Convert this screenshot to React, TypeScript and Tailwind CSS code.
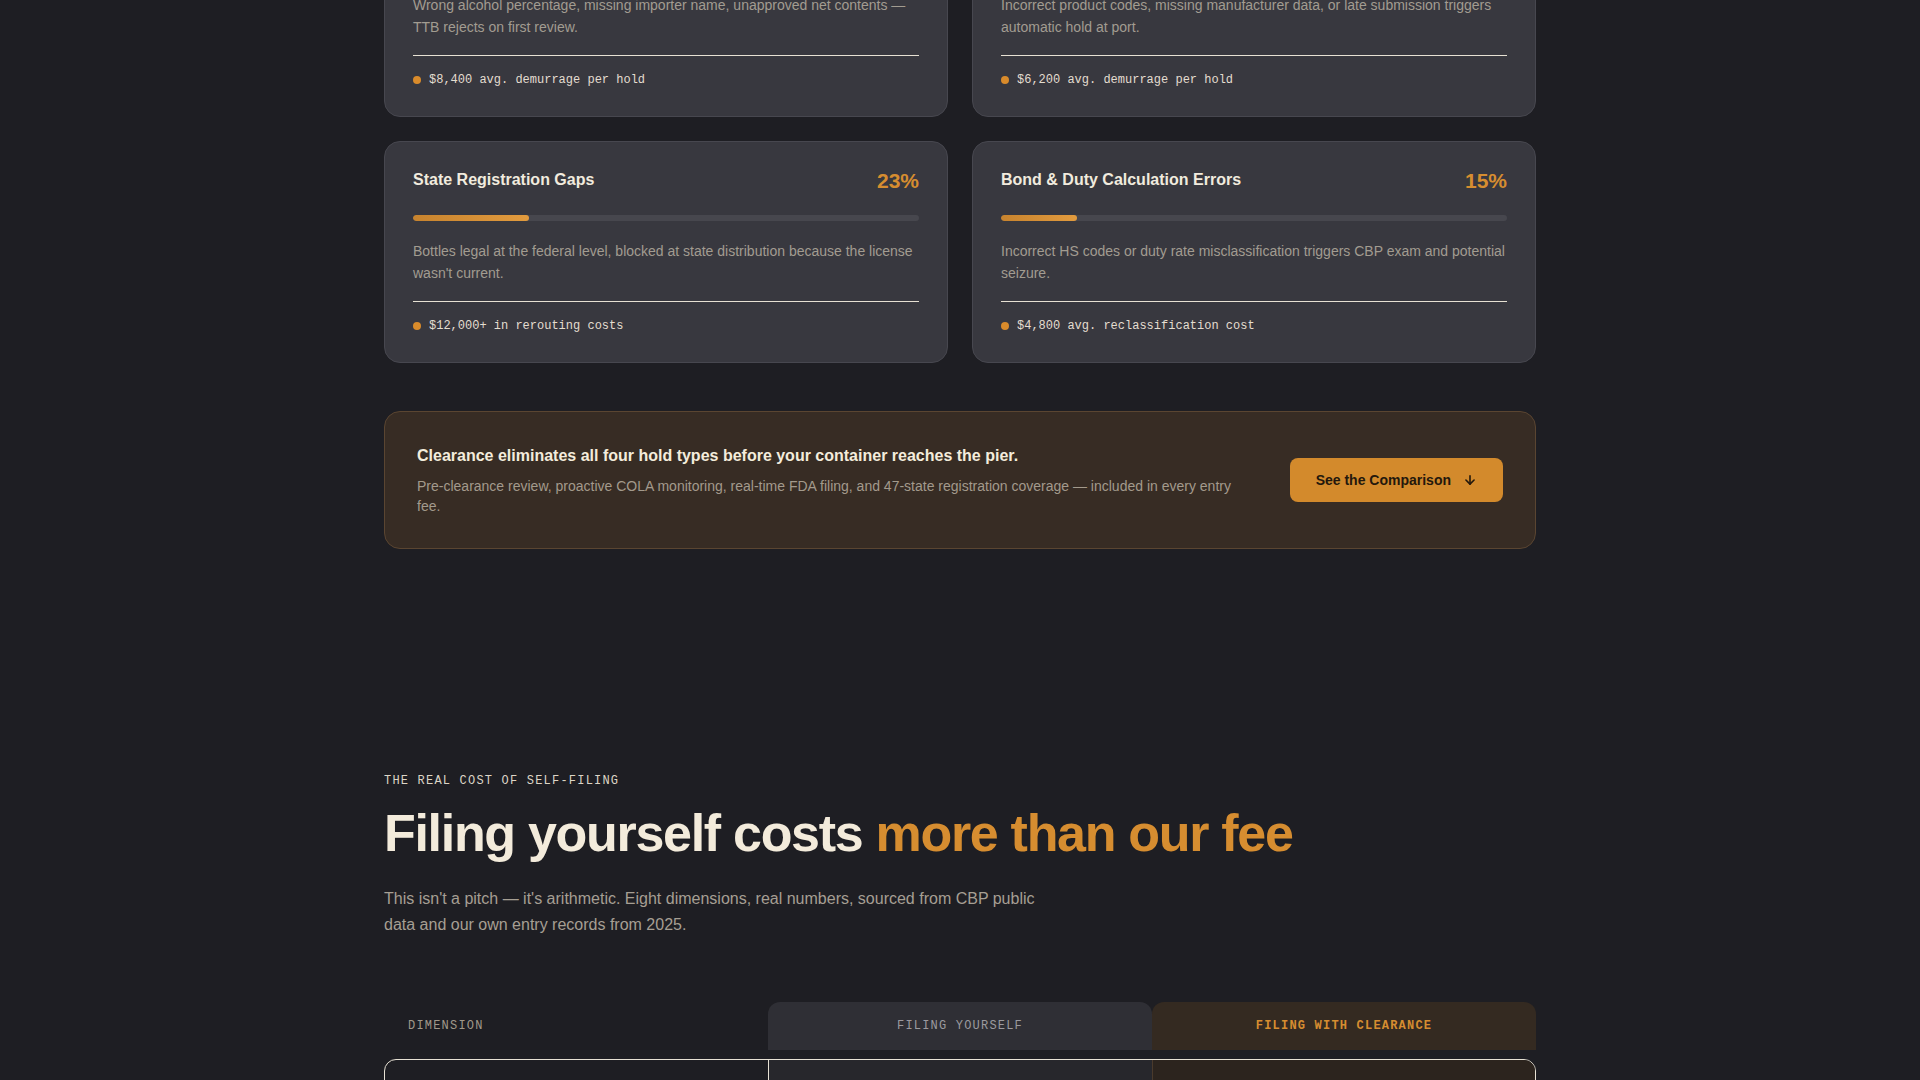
import { ArrowDown } from "lucide-react";

type Hold = {
  title: string;
  pct: number;
  desc: string;
  cost: string;
};

const HOLDS: Hold[] = [
  {
    title: "COLA Label Mismatches",
    pct: 34,
    desc: "Wrong alcohol percentage, missing importer name, unapproved net contents — TTB rejects on first review.",
    cost: "$8,400 avg. demurrage per hold",
  },
  {
    title: "FDA Prior Notice Errors",
    pct: 28,
    desc: "Incorrect product codes, missing manufacturer data, or late submission triggers automatic hold at port.",
    cost: "$6,200 avg. demurrage per hold",
  },
  {
    title: "State Registration Gaps",
    pct: 23,
    desc: "Bottles legal at the federal level, blocked at state distribution because the license wasn't current.",
    cost: "$12,000+ in rerouting costs",
  },
  {
    title: "Bond & Duty Calculation Errors",
    pct: 15,
    desc: "Incorrect HS codes or duty rate misclassification triggers CBP exam and potential seizure.",
    cost: "$4,800 avg. reclassification cost",
  },
];

const ROWS = [
  ["Time per entry", "6–10 hours", "Under 20 minutes"],
  ["Hold rate", "1 in 4 entries", "Under 2%"],
  ["Average demurrage", "$8,400 per hold", "$0 — covered"],
];

function HoldCard({ title, pct, desc, cost }: Hold) {
  return (
    <div className="rounded-2xl border border-[#47474f] bg-[#38383f] px-7 pt-6 pb-7">
      <div className="flex h-7 items-center justify-between">
        <h3 className="text-base font-bold text-[#f1ebde]">{title}</h3>
        <span className="text-[21px] leading-none font-bold text-[#d68d30]">{pct}%</span>
      </div>

      <div className="mt-[21px] h-1.5 w-full overflow-hidden rounded-full bg-[#47474e]">
        <div
          className="h-full rounded-full bg-linear-to-r from-[#c7832e] to-[#e29b3e]"
          style={{ width: `${pct}%` }}
        />
      </div>

      <p className="mt-[19px] text-sm leading-[22px] text-[#a29c91]">{desc}</p>

      <div className="mt-[17px] flex items-center gap-2 border-t border-[#e7e1d4] pt-4">
        <span className="size-2 shrink-0 rounded-full bg-[#d98b2b]" />
        <span className="font-['Liberation_Mono',monospace] text-xs leading-4 text-[#e4ddd0]">
          {cost}
        </span>
      </div>
    </div>
  );
}

export default function App() {
  return (
    <div className="flex min-h-screen flex-col overflow-hidden bg-[#1e1e23] font-['Liberation_Sans',Arial,sans-serif] text-[#efe8da]">
      {/* hold types */}
      <section className="mx-auto -mt-[105px] w-[1152px] pb-24">
        <div className="grid grid-cols-2 gap-6">
          {HOLDS.map((h) => (
            <HoldCard key={h.title} {...h} />
          ))}
        </div>

        <div className="mt-12 flex items-center gap-12 rounded-2xl border border-[#5a4531] bg-[#372c24] px-8 py-8">
          <div className="flex-1">
            <p className="text-base leading-6 font-bold text-[#f4ecdc]">
              Clearance eliminates all four hold types before your container reaches the pier.
            </p>
            <p className="mt-2 text-sm leading-5 text-[#a39a8c]">
              Pre-clearance review, proactive COLA monitoring, real-time FDA filing, and 47-state
              registration coverage — included in every entry fee.
            </p>
          </div>
          <button className="flex shrink-0 items-center gap-3 rounded-lg bg-[#d38a2c] px-[26px] py-3 text-sm leading-5 font-bold text-[#24180c]">
            See the Comparison
            <ArrowDown size={14} strokeWidth={2.75} />
          </button>
        </div>
      </section>

      {/* self-filing comparison */}
      <section className="mx-auto w-[1152px] pt-32 pb-24">
        <p className="font-['Liberation_Mono',monospace] text-xs leading-4 tracking-[0.1em] text-[#ddd5c6]">
          THE REAL COST OF SELF-FILING
        </p>
        <h2 className="mt-3 text-[52px] leading-[1.25] font-bold tracking-tight text-[#f3ebdb]">
          Filing yourself costs <span className="text-[#d68d30]">more than our fee</span>
        </h2>
        <p className="mt-5 max-w-2xl text-base leading-[1.6] text-[#a69f93]">
          This isn't a pitch — it's arithmetic. Eight dimensions, real numbers, sourced from CBP
          public data and our own entry records from 2025.
        </p>

        <div className="mt-[65px] grid grid-cols-3 font-['Liberation_Mono',monospace] text-xs tracking-[0.1em]">
          <div className="flex h-12 items-center pl-6 text-[#a0988a]">DIMENSION</div>
          <div className="flex h-12 items-center justify-center rounded-t-xl bg-[#2f2f35] text-[#9b9a9f]">
            FILING YOURSELF
          </div>
          <div className="flex h-12 items-center justify-center rounded-t-xl bg-[#342a21] font-bold text-[#d68d30]">
            FILING WITH CLEARANCE
          </div>
        </div>

        <div className="mt-[9px] overflow-hidden rounded-t-xl border border-[#e7e1d4]">
          {ROWS.map(([dim, self, ours]) => (
            <div key={dim} className="grid grid-cols-3 text-sm">
              <div className="px-6 py-6 text-[#e4ddd0]">{dim}</div>
              <div className="border-l border-[#e7e1d4] bg-[#27272c] px-6 py-6 text-center text-[#a29c91]">
                {self}
              </div>
              <div className="border-l border-[#4a3a2c] bg-[#2c241e] px-6 py-6 text-center font-bold text-[#d68d30]">
                {ours}
              </div>
            </div>
          ))}
        </div>
      </section>
    </div>
  );
}
